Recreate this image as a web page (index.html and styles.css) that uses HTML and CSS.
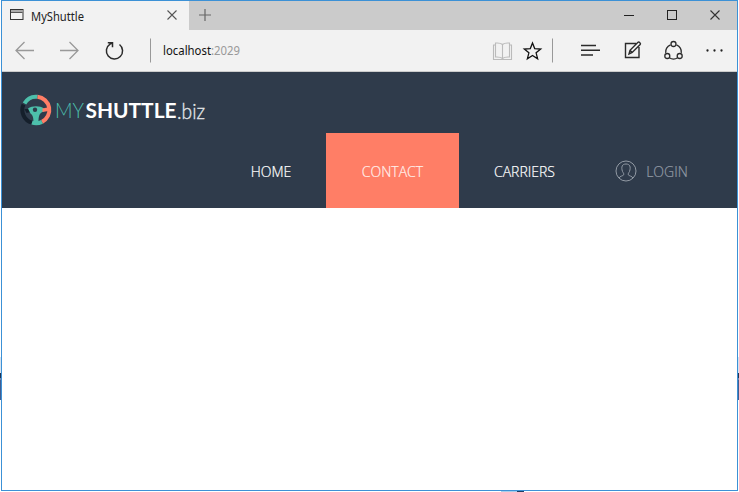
FILE: index.html
```
<!DOCTYPE html>
<html lang="en">
<head>
<meta charset="utf-8">
<title>MyShuttle</title>
<link rel="stylesheet" href="styles.css">
</head>
<body>
<div class="window">
  <div class="titlebar">
    <div class="tab">
      <svg class="tab-icon" width="14" height="12" viewBox="0 0 14 12"><rect x=".5" y=".5" width="12.500" height="10" fill="none" stroke="#333"/><path d="M1 2h11.500" stroke="#aaa" stroke-width="2"/><path d="M1 3.500h11.500" stroke="#555"/></svg>
      <span class="tab-title"><svg width="56" height="20"><text x="0" y="15" textLength="53" lengthAdjust="spacingAndGlyphs">MyShuttle</text></svg></span>
      <svg class="tab-close" width="10" height="10" viewBox="0 0 10 10"><path d="M.5.5l9 9m0-9l-9 9" stroke="#555" stroke-width="1.1"/></svg>
    </div>
    <svg class="new-tab" width="12" height="12" viewBox="0 0 12 12"><path d="M6 0v12M0 6h12" stroke="#666" stroke-width="1.2"/></svg>
    <div class="controls">
      <svg width="10" height="10"><path d="M0 5.5h10" stroke="#222"/></svg>
      <svg width="10" height="10"><rect x=".5" y=".5" width="9" height="9" fill="none" stroke="#222"/></svg>
      <svg width="10" height="10"><path d="M.5.5l9 9m0-9l-9 9" stroke="#333" stroke-width="1.1"/></svg>
    </div>
  </div>
  <div class="toolbar">
    <svg width="735" height="41" viewBox="2 30 735 41" fill="none" stroke="#2b2b2b" stroke-width="1.3">
      <g stroke="#999"><path d="M34 50.500H16m8.500-8.500L16 50.500l8.500 8.500"/><path d="M60 50.500h18m-8.500-8.500l8.500 8.500-8.500 8.500"/></g>
      <path d="M119.500 44.500A8.100 8.100 0 1 1 110 44.100L112.500 42.800M107.800 42.700h4.700v4.600" stroke-width="1.500"/>
      <path d="M150.500 38.500v24" stroke="#999" stroke-width="1"/>
      <text x="163" y="55" textLength="48" lengthAdjust="spacingAndGlyphs">localhost</text>
      <text class="port" x="211" y="55" textLength="29" lengthAdjust="spacingAndGlyphs">:2029</text>
      <path d="M502.500 44.500c-2-2-5-1.500-7-1.500v14c3 0 5-.3 7 1.500 2-1.800 4-1.500 7-1.500v-14c-2 0-5-.5-7 1.500v14M495.500 45h-2v14.500h18V45h-2" stroke="#bbb" stroke-width="1.100"/>
      <path d="M532.500 43l2.200 5.600 6 .4-4.600 3.800 1.500 5.900-5.100-3.300-5.100 3.300 1.500-5.900-4.600-3.800 6-.4z" stroke="#111" stroke-width="1.300"/>
      <path d="M552.500 38.500v24" stroke="#999" stroke-width="1"/>
      <path d="M581 45.500h15M581 50.200h19M581 54.900h12" stroke-width="1.500"/>
      <path d="M636 43.500h-10.500v14h13.500V47M629 54l1-3.700 8-8c1-1 3.200 1.200 2.200 2.200l-8 8zM630 50.300l2.200 2.200" stroke-width="1.400"/>
      <path d="M670.500 44.900a8 8 0 0 0-4.800 8M669.300 57.800q4.200 2.600 8.400 0M676.500 44.900a8 8 0 0 1 4.800 8"/>
      <circle cx="673.500" cy="44" r="2.500"/><circle cx="667.300" cy="56" r="2.500"/><circle cx="679.700" cy="56" r="2.500"/>
      <g fill="#222" stroke="none"><circle cx="707.500" cy="50.500" r="1.150"/><circle cx="714.500" cy="50.500" r="1.150"/><circle cx="721.500" cy="50.500" r="1.150"/></g>
    </svg>
  </div>
  <header class="site-header">
    <svg class="logo" width="188" height="34" viewBox="20 93 188 34">
      <g fill="none" stroke-width="4">
        <path d="M23.500 104.500A13.300 13.300 0 0 0 32 122.700" stroke="#151f2b"/>
        <path d="M24.500 103.500A13.300 13.300 0 0 1 37.500 96.800" stroke="#4dbfab"/>
        <path d="M37.500 96.800A13.300 13.300 0 0 1 42 121.900" stroke="#ff7e66"/>
        <path d="M42 121.900A13.300 13.300 0 0 1 32 122.700" stroke="#4dbfab"/>
      </g>
      <path d="M24.500 109h4l2 3-4 1z" fill="#151f2b"/>
      <path d="M28 108.500c4-3 12-3 16 0l1.500 2-4 2c-2.500 2-3 4-3 11h-5c0-6-.5-8-3-10z" fill="#4dbfab"/>
      <path d="M42.500 108.500l6-1.300v3.800l-6 .9z" fill="#ff7e66"/>
      <circle cx="35" cy="109.800" r="2.200" fill="#2f3b4a"/>
      <text class="logo-my" x="55" y="118" textLength="29" lengthAdjust="spacingAndGlyphs">MY</text>
      <text class="logo-shuttle" x="85.500" y="118" textLength="91" lengthAdjust="spacingAndGlyphs">SHUTTLE</text>
      <text class="logo-biz" x="177" y="119" textLength="28" lengthAdjust="spacingAndGlyphs">.biz</text>
    </svg>
    <nav class="nav">
      <a class="nav-item home">HOME</a>
      <a class="nav-item contact">CONTACT</a>
      <a class="nav-item carriers">CARRIERS</a>
      <a class="nav-item login">
        <svg width="22" height="22" viewBox="0 0 22 22" fill="none" stroke="#929aa4"><circle cx="11" cy="11" r="10"/><path d="M4 18c1-2 4-2 4.700-3.200.5-1-.5-2-1.200-3.300-1.500-4.500-.5-7.500 3.500-7.500s5 3 3.500 7.500c-.7 1.300-1.700 2.300-1.200 3.300C14 16 17 16 18 18"/></svg>
        <span>LOGIN</span>
      </a>
    </nav>
  </header>
  <main class="page"></main>
</div>
<div class="edge edge-left"></div>
<div class="edge edge-right"></div>
<div class="edge-bottom"></div>
</body>
</html>
```
FILE: styles.css
```
* { box-sizing: border-box; }
body { margin: 0; height: 492px; overflow: hidden; background: #fff; font-family: "Open Sans", sans-serif; }
svg { display: block; flex: none; }
.window { width: 737px; height: 491px; margin-left: 1px; border: 1px solid #3c91d6; display: flex; flex-direction: column; }
.titlebar { height: 29px; flex: none; background: #cbcbcb; display: flex; align-items: center; }
.tab { width: 187px; height: 29px; background: #f2f2f2; display: flex; align-items: center; padding-left: 8px; }
.tab-icon { margin-bottom: 1px; }
.tab-title { margin-left: 7px; }
.tab-title svg { overflow: visible; }
.tab-title text { font: 12px "Noto Sans", sans-serif; fill: #222; }
.tab-close { margin-left: 80px; margin-bottom: 1px; }
.new-tab { margin: 0 0 1px 10px; }
.controls { margin: 0 17px 1px auto; display: flex; gap: 33px; }
.toolbar { height: 42px; flex: none; background: #f2f2f2; border-bottom: 1px solid #ccc; }
.toolbar text { font: 12px "Noto Sans", sans-serif; fill: #111; stroke: none; }
.toolbar .port { fill: #999; }
.site-header { height: 136px; flex: none; background: #2f3b4b; display: flex; flex-direction: column; justify-content: space-between; }
.logo { margin: 21px 0 0 18px; }
.logo text { font-family: Lato, sans-serif; }
.logo .logo-my { font-size: 21px; font-weight: 300; fill: #4dbfab; }
.logo .logo-shuttle { font-size: 21px; font-weight: 700; fill: #fff; }
.logo .logo-biz { font-size: 21px; font-weight: 300; fill: #e4e7ea; stroke: #e4e7ea; stroke-width: .3; }
.nav { height: 75px; display: flex; margin-left: 213px; }
.nav-item { display: flex; align-items: center; justify-content: center; padding-top: 1px; color: #fff; font-size: 14px; font-weight: 300; white-space: nowrap; -webkit-text-stroke: .2px currentColor; }
.home { width: 111px; padding-left: 1px; }
.contact { width: 133px; background: #ff7e66; color: #fff0ec; }
.carriers { width: 130px; padding-left: 1px; }
.login { width: 125px; gap: 9px; color: #929aa4; }
.page { flex: 1; background: #fff; }
.edge { position: absolute; top: 357px; width: 1px; height: 43px; background: linear-gradient(#d5e3f1 0 16px, #1e3354 16px 21px, #7188af 21px 23px, #405d91 23px); }
.edge-left { left: 0; }
.edge-right { left: 738px; }
.edge-bottom { position: absolute; left: 501px; top: 491px; width: 23px; height: 1px; background: linear-gradient(90deg, #a9cde9 0 16px, #1e3d63 16px); }
```
